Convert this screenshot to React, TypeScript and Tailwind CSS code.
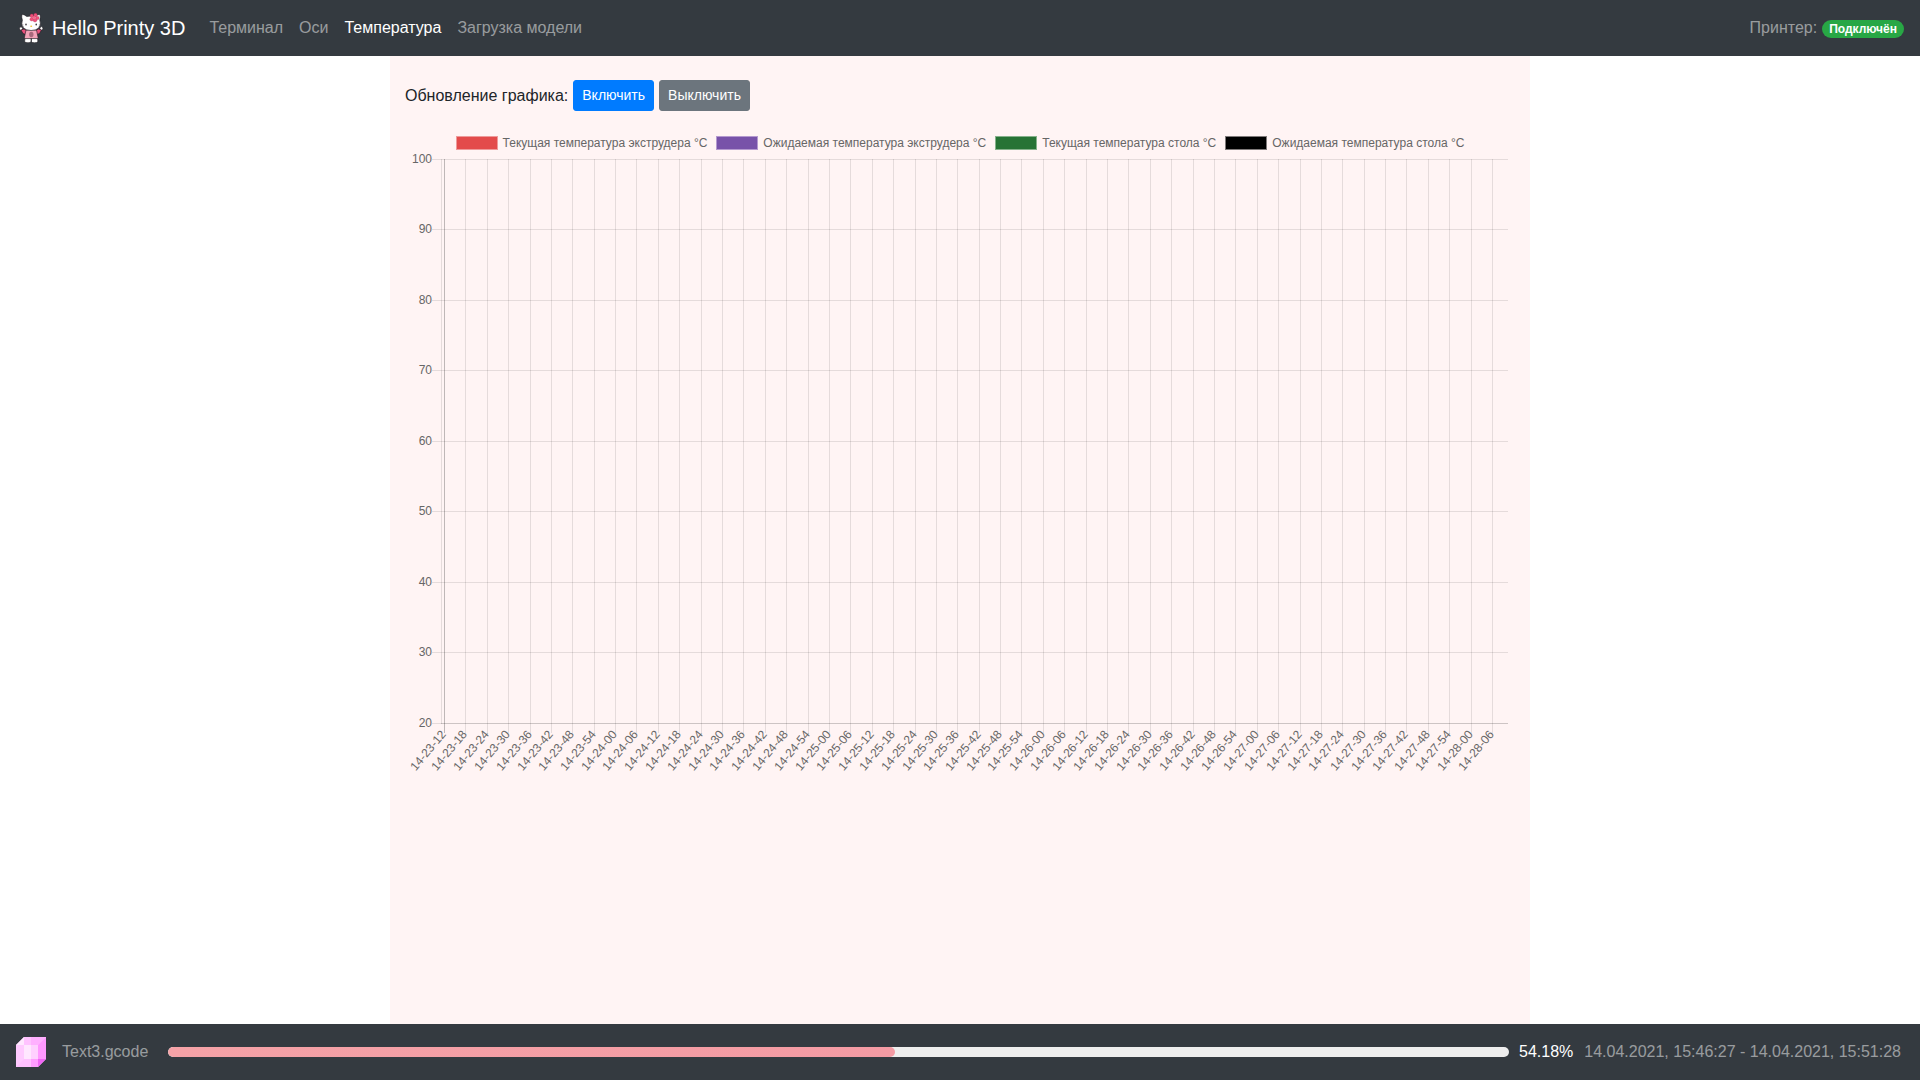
import React from 'react';

const NAV_LINKS = [
  { title: 'Терминал', active: false },
  { title: 'Оси', active: false },
  { title: 'Температура', active: true },
  { title: 'Загрузка модели', active: false },
];

const DATASETS = [
  { label: 'Текущая температура экструдера °C', box: 'bg-[#e34b4b] border-[#ee9a9a]' },
  { label: 'Ожидаемая температура экструдера °C', box: 'bg-[#7852a9] border-[#b499cf]' },
  { label: 'Текущая температура стола °C', box: 'bg-[#277335] border-[#86b18b]' },
  { label: 'Ожидаемая температура стола °C', box: 'bg-black border-[#7f7a7a]' },
];

// One label every 6 seconds starting at 14-23-12
const TIME_LABELS = Array.from({ length: 50 }, (_, i) => {
  const total = 23 * 60 + 12 + i * 6;
  const pad = (n: number) => String(n).padStart(2, '0');
  return `14-${pad(Math.floor(total / 60))}-${pad(total % 60)}`;
});

const TEMPERATURES = [100, 90, 80, 70, 60, 50, 40, 30, 20];

const PROGRESS = 54.18;

const KittyLogo: React.FC = () => (
  <svg width="30" height="30" viewBox="0 0 30 30" aria-hidden="true">
    <g stroke="#1c1a20" strokeWidth="0.6" strokeLinejoin="round">
      <ellipse cx="5" cy="15.6" rx="1.5" ry="1.8" fill="#fff" />
      <ellipse cx="25.4" cy="15.4" rx="1.5" ry="1.8" fill="#fff" />
      <path d="M5 17l3-1 4 2-1 4-4-1.5z" fill="#e8517c" />
      <path d="M25.5 17l-3-1-4 2 1 4 4-1.5z" fill="#e8517c" />
      <path d="M9 25h6v3.600q-.4 1.200-3 1.200t-3.400-1.200z" fill="#fff" />
      <path d="M15.500 25h6l.4 3.600q-.8 1.200-3.400 1.200t-3-1.200z" fill="#fff" />
      <path d="M10 17h10.500l1.800 8.600H8.200z" fill="#f3a3b8" />
      <path d="M6 1.200q2.200.2 4.800 2.300 4.200-1 8.400 0Q21.800 1.200 24 1.500q.8 3-.2 5.700 1.700 4.400-.7 7.300-2.600 3-8 3t-8-3q-2.300-3-.7-7.300-1.200-3-.4-6z" fill="#fff" />
    </g>
    <ellipse cx="15.300" cy="21.500" rx="2.200" ry="2.800" fill="#a8697c" />
    <ellipse cx="10" cy="11.500" rx="0.7" ry="1" fill="#18161a" />
    <ellipse cx="20.200" cy="11.500" rx="0.7" ry="1" fill="#18161a" />
    <ellipse cx="15.200" cy="13.200" rx="1" ry="0.7" fill="#f0c02a" />
    <path d="M5 11.500l2.500.4M5.300 14l2.400-.5M25.300 11.500l-2.500.4M25 14l-2.400-.5" stroke="#3a363c" strokeWidth="0.4" />
    <g fill="#f0507a" stroke="#a3264c" strokeWidth="0.3">
      <circle cx="15.800" cy="2.700" r="1.800" />
      <circle cx="19.500" cy="2" r="1.800" />
      <circle cx="21.400" cy="5" r="1.800" />
      <circle cx="19" cy="7.200" r="1.800" />
      <circle cx="15.700" cy="6.200" r="1.800" />
    </g>
    <circle cx="18.200" cy="4.600" r="1.500" fill="#f7688c" />
  </svg>
);

const CubeIcon: React.FC = () => (
  <svg width="30" height="30" viewBox="0 0 30 30" aria-hidden="true" className="shrink-0">
    <path d="M0 8l8-8h22v22l-8 8H0z" fill="#ffcaff" />
    <path d="M0 8l8-8v8z" fill="#ffe8ff" />
    <path d="M15 0h15l-8 8h-7z" fill="#ffb0ff" />
    <path d="M8 0h7v8H8z" fill="#ffc2ff" />
    <path d="M30 0v22h-8V8z" fill="#ff98ff" />
    <path d="M8 8h7v14H8z" fill="#ffe6ff" />
    <path d="M15 8h7v14h-7z" fill="#ffd0ff" />
    <path d="M0 30l8-8h7v8z" fill="#ffc0ff" />
    <path d="M15 22h7v8h-7z" fill="#ff9cff" />
    <path d="M22 22h8l-8 8z" fill="#f066f5" />
  </svg>
);

const TemperatureChart: React.FC = () => {
  const columnX = (i: number) => Math.round(39 + (i * 1048) / 49) + 0.5;
  const rowY = (i: number) => Math.floor(8 + i * 70.5) + 0.5;

  return (
    <div>
      <ul className="flex justify-center gap-[9px] pt-2 text-[12px] leading-4 text-[#666]">
        {DATASETS.map((set) => (
          <li key={set.label} className="flex items-center gap-[5px] whitespace-nowrap">
            <span className={`h-[14px] w-[42px] border ${set.box}`} />
            {set.label}
          </li>
        ))}
      </ul>
      <svg viewBox="0 0 1110 624" className="block h-auto w-full" role="img" aria-label="График температуры">
        <g stroke="#000" strokeOpacity="0.1">
          {TEMPERATURES.map((t, i) => (
            <line key={t} x1="27" x2="1103" y1={rowY(i)} y2={rowY(i)} />
          ))}
          {TIME_LABELS.map((label, i) => (
            <line
              key={label}
              x1={columnX(i)}
              x2={columnX(i)}
              y1="8"
              y2="582"
              strokeOpacity={i === 0 ? 0.25 : 0.1}
            />
          ))}
          <line x1="36.5" x2="36.5" y1="8" y2="573" />
          <line x1="36" x2="1103" y1="572.5" y2="572.5" />
        </g>
        <g fill="#666" fontSize="12" textAnchor="end">
          {TEMPERATURES.map((t, i) => (
            <text key={t} x="27" y={rowY(i) + 3}>
              {t}
            </text>
          ))}
          {TIME_LABELS.map((label, i) => (
            <text key={label} transform={`translate(${columnX(i) - 1} 581) rotate(-50)`} y="4">
              {label}
            </text>
          ))}
        </g>
      </svg>
    </div>
  );
};

const App: React.FC = () => {
  return (
    <div className="flex min-h-screen flex-col bg-white font-['Liberation_Sans',Arial,sans-serif] text-base text-[#212529]">
      <header className="flex h-14 items-center bg-[#343a40] px-4">
        <a href="#" className="mr-4 flex items-center gap-[6px] text-xl text-white">
          <KittyLogo />
          Hello Printy 3D
        </a>
        <nav className="flex">
          {NAV_LINKS.map((link) => (
            <a
              key={link.title}
              href="#"
              className={`px-2 py-2 ${link.active ? 'text-white' : 'text-white/50'}`}
            >
              {link.title}
            </a>
          ))}
        </nav>
        <div className="ml-auto flex items-center gap-[5px] text-white/50">
          Принтер:
          <span className="mt-[2px] rounded-full bg-[#28a745] px-[7px] py-[3px] text-xs leading-3 font-bold text-white">
            Подключён
          </span>
        </div>
      </header>

      <main className="mx-auto w-full max-w-[1140px] grow bg-[#fff4f4] px-[15px] pt-6">
        <div className="mb-4 flex items-center gap-[5px]">
          <span>Обновление графика:</span>
          <button
            type="button"
            className="rounded-[3px] border border-[#007bff] bg-[#007bff] px-2 py-1 text-sm leading-[21px] text-white"
          >
            Включить
          </button>
          <button
            type="button"
            className="rounded-[3px] border border-[#6c757d] bg-[#6c757d] px-2 py-1 text-sm leading-[21px] text-white"
          >
            Выключить
          </button>
        </div>
        <TemperatureChart />
      </main>

      <footer className="flex h-14 items-center bg-[#343a40] px-4 text-white/50">
        <CubeIcon />
        <span className="ml-4 whitespace-nowrap">Text3.gcode</span>
        <div
          className="mr-[10px] ml-5 h-[10px] grow overflow-hidden rounded-full bg-[#eee]"
          role="progressbar"
          aria-label="Прогресс печати"
          aria-valuenow={PROGRESS}
        >
          <div
            className="h-full rounded-full bg-linear-to-r from-[#f5a2a7] to-[#f49ba4]"
            style={{ width: `${PROGRESS}%` }}
          />
        </div>
        <span className="mr-[11px] text-white">{PROGRESS}%</span>
        <span className="mr-[3px] whitespace-nowrap">14.04.2021, 15:46:27 - 14.04.2021, 15:51:28</span>
      </footer>
    </div>
  );
};

export default App;
